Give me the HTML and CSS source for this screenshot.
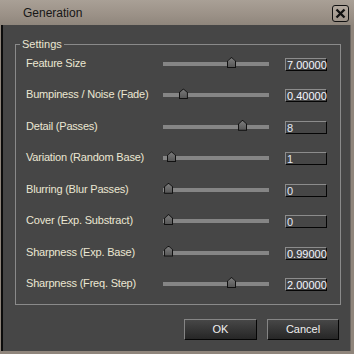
FILE: index.html
```html
<!DOCTYPE html>
<html lang="en">
<head>
    <meta charset="UTF-8">
    <title>Generation</title>
    <link rel="stylesheet" href="styles.css">
</head>
<body>
    <div class="window">
        <div class="titlebar">
            <span class="title">Generation</span>
            <button class="close" title="Close">
                <svg width="11" height="11" viewBox="0 0 11 11">
                    <path d="M1.5 1.5 L9.5 9.5 M9.5 1.5 L1.5 9.5" stroke="#111" stroke-width="2.4" fill="none"/>
                </svg>
            </button>
        </div>
        <div class="client">
            <fieldset class="settings">
                <legend>Settings</legend>
                <div class="rows">
                    <span class="label">Feature Size</span>
                    <div class="slider"><div class="track"></div><span class="thumb" style="left: 60.4%"></span></div>
                    <div class="value hl">7.00000</div>

                    <span class="label">Bumpiness / Noise (Fade)</span>
                    <div class="slider"><div class="track"></div><span class="thumb" style="left: 15%"></span></div>
                    <div class="value hl">0.40000</div>

                    <span class="label">Detail (Passes)</span>
                    <div class="slider"><div class="track"></div><span class="thumb" style="left: 70.8%"></span></div>
                    <div class="value">8</div>

                    <span class="label">Variation (Random Base)</span>
                    <div class="slider"><div class="track"></div><span class="thumb" style="left: 3.8%"></span></div>
                    <div class="value">1</div>

                    <span class="label">Blurring (Blur Passes)</span>
                    <div class="slider"><div class="track"></div><span class="thumb" style="left: 1%"></span></div>
                    <div class="value">0</div>

                    <span class="label">Cover (Exp. Substract)</span>
                    <div class="slider"><div class="track"></div><span class="thumb" style="left: 1%"></span></div>
                    <div class="value">0</div>

                    <span class="label">Sharpness (Exp. Base)</span>
                    <div class="slider"><div class="track"></div><span class="thumb" style="left: 1%"></span></div>
                    <div class="value hl">0.99000</div>

                    <span class="label">Sharpness (Freq. Step)</span>
                    <div class="slider"><div class="track"></div><span class="thumb" style="left: 60.4%"></span></div>
                    <div class="value hl">2.00000</div>
                </div>
            </fieldset>
            <div class="buttons">
                <button class="btn ok">OK</button>
                <button class="btn cancel">Cancel</button>
            </div>
        </div>
    </div>
</body>
</html>
```

FILE: styles.css
```css
:root {
    --frame: #8f857b;
    --client-bg: #464646;
    --label: #ebe7d3;
    --line: #8a8a8a;
}

* {
    box-sizing: border-box;
}

body {
    margin: 0;
    background: #3a6ea5;
    font-family: "Liberation Sans", Arial, sans-serif;
    font-size: 11px;
}

.window {
    width: 354px;
    height: 354px;
    background: var(--frame);
    display: flex;
    flex-direction: column;
    padding: 0 3px 3px 1px;
}

.titlebar {
    height: 25px;
    margin: 0 -3px 0 -1px;
    padding: 0 5px 0 23px;
    display: flex;
    align-items: center;
    justify-content: space-between;
    background: linear-gradient(#a9a096, #9b9187 60%, #8f867c);
}

.title {
    color: #161616;
    font-size: 12px;
}

.close {
    width: 17px;
    height: 17px;
    padding: 0;
    margin-top: 1px;
    border: 1px solid #111;
    border-radius: 3px;
    background: linear-gradient(#b3a99f, #9d9389);
    display: flex;
    align-items: center;
    justify-content: center;
}

.client {
    flex: 1;
    background: var(--client-bg);
    border-left: 2px solid #0c0c0c;
    border-right: 1px solid #6a6560;
    padding: 12px 9px 0 12px;
}

.settings {
    margin: 0;
    padding: 0 0 11px;
    border: 1px solid var(--line);
    min-width: 0;
}

.settings legend {
    color: var(--label);
    padding: 0 2px;
    margin-left: 4px;
    line-height: 14px;
}

.rows {
    display: grid;
    grid-template-columns: 137px 106px 58px;
    grid-auto-rows: 20px;
    row-gap: 11.43px;
    align-items: center;
    padding: 2px 0 0 10px;
}

.label {
    color: var(--label);
    white-space: nowrap;
    letter-spacing: -0.2px;
}

.slider {
    position: relative;
    height: 11px;
    padding-top: 5px;
    margin-top: -1px;
}

.track {
    height: 4px;
    background: #858585;
}

.thumb {
    position: absolute;
    top: 0;
    width: 9px;
    height: 11px;
    background: #111;
    clip-path: polygon(0 38%, 50% 0, 100% 38%, 100% 100%, 0 100%);
}

.thumb::after {
    content: '';
    position: absolute;
    inset: 1px;
    background: linear-gradient(#7c7c7c, #565656);
    clip-path: polygon(0 34%, 50% 0, 100% 34%, 100% 100%, 0 100%);
}

.value {
    justify-self: end;
    width: 42px;
    height: 13px;
    margin-top: 3px;
    padding: 0 0 0 1px;
    line-height: 12px;
    color: #e2e8f6;
    border-top: 1px solid #8c8c8c;
    border-left: 1px solid #8c8c8c;
    border-bottom: 1px solid #050505;
    border-right: 1px solid #050505;
    font-size: 11px;
}

.value.hl {
    color: #f4f6ff;
}

.buttons {
    display: flex;
    justify-content: flex-end;
    gap: 10px;
    margin-top: 14px;
    padding-right: 2px;
}

.btn {
    height: 21px;
    font-family: inherit;
    font-size: 11px;
    color: #f0f0f0;
    background: linear-gradient(#474747, #262626);
    border: 1px solid #050505;
    border-top-color: #858585;
    border-left-color: #858585;
    padding: 0;
}

.ok {
    width: 73px;
}

.cancel {
    width: 72px;
}
```
